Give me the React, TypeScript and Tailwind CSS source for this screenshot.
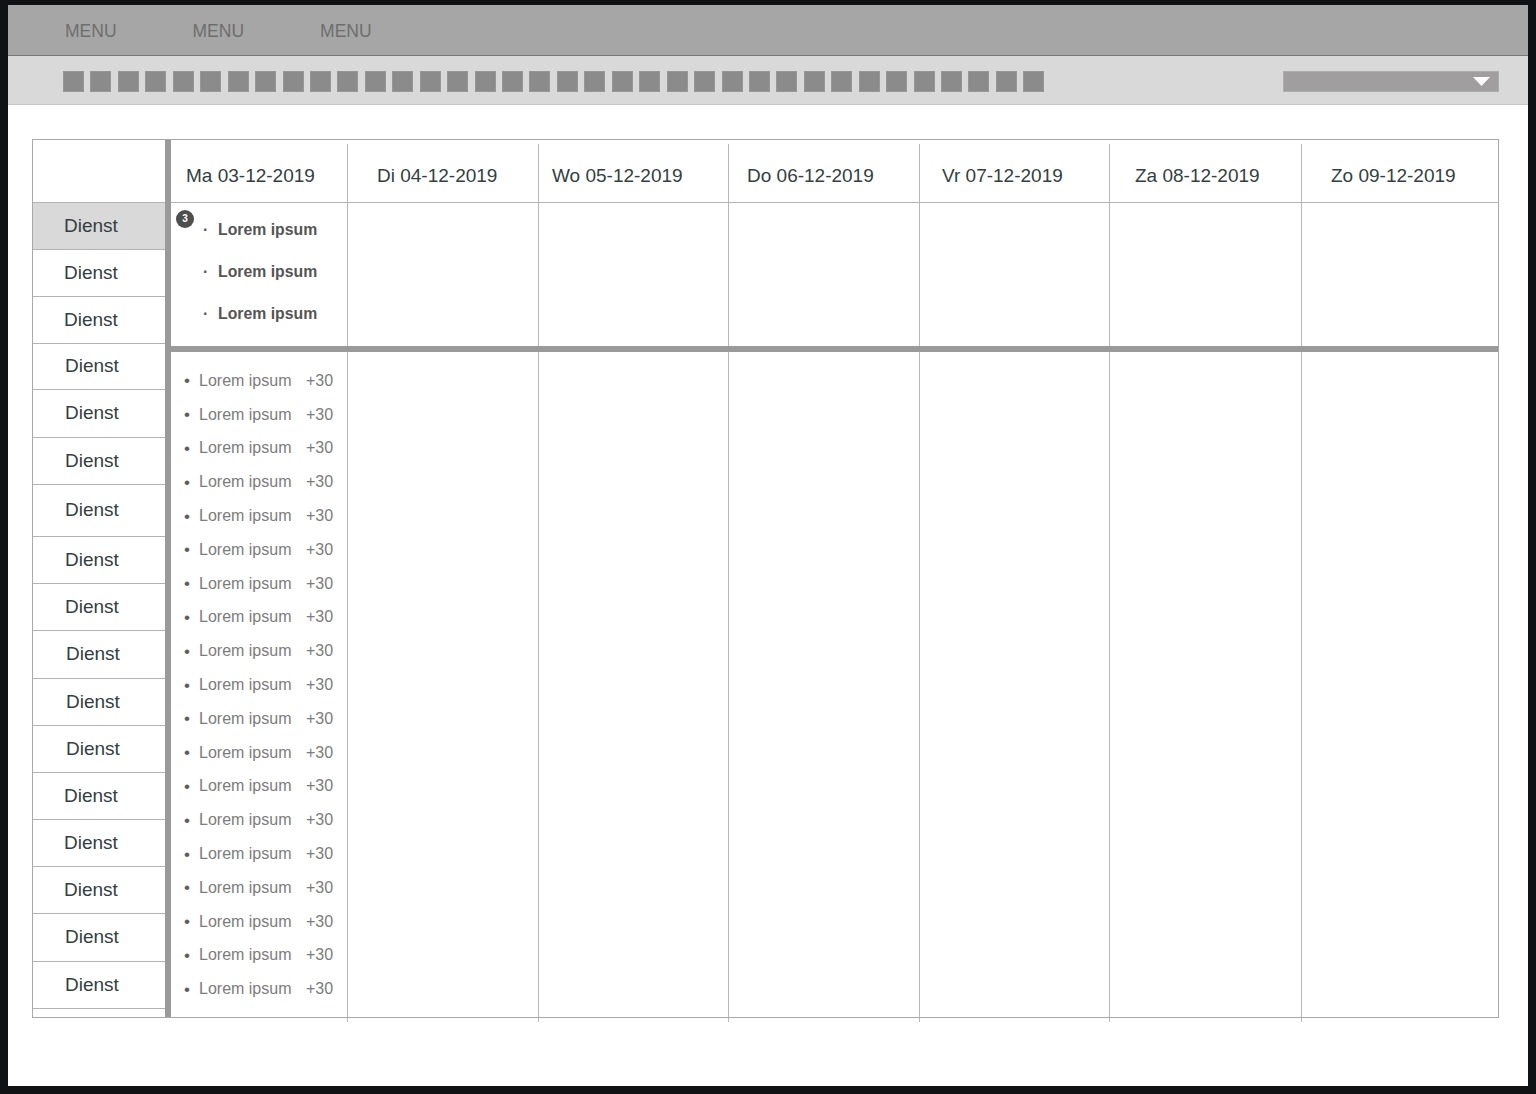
import React from "react";

const rows: { h: string; pl: string; bg?: string }[] = [
  { h: "h-[46px]", pl: "pl-[31px]", bg: "bg-[#d9d9d9]" },
  { h: "h-[46px]", pl: "pl-[31px]" },
  { h: "h-[46px]", pl: "pl-[31px]" },
  { h: "h-[45px]", pl: "pl-[32px]" },
  { h: "h-[47px]", pl: "pl-[32px]" },
  { h: "h-[46px]", pl: "pl-[32px]" },
  { h: "h-[51px]", pl: "pl-[32px]" },
  { h: "h-[46px]", pl: "pl-[32px]" },
  { h: "h-[46px]", pl: "pl-[32px]" },
  { h: "h-[47px]", pl: "pl-[33px]" },
  { h: "h-[46px]", pl: "pl-[33px]" },
  { h: "h-[46px]", pl: "pl-[33px]" },
  { h: "h-[46px]", pl: "pl-[31px]" },
  { h: "h-[46px]", pl: "pl-[31px]" },
  { h: "h-[46px]", pl: "pl-[31px]" },
  { h: "h-[47px]", pl: "pl-[32px]" },
  { h: "h-[46px]", pl: "pl-[32px]" },
];

const cols: { w: string; label: string; pl: string; first?: boolean }[] = [
  { w: "w-[176px]", label: "Ma 03-12-2019", pl: "pl-[15px]", first: true },
  { w: "w-[191px]", label: "Di 04-12-2019", pl: "pl-[29px]" },
  { w: "w-[190px]", label: "Wo 05-12-2019", pl: "pl-[13px]" },
  { w: "w-[191px]", label: "Do 06-12-2019", pl: "pl-[18px]" },
  { w: "w-[190px]", label: "Vr 07-12-2019", pl: "pl-[22px]" },
  { w: "w-[192px]", label: "Za 08-12-2019", pl: "pl-[25px]" },
  { w: "flex-1", label: "Zo 09-12-2019", pl: "pl-[29px]" },
];

const squares = Array.from({ length: 36 }, (_, i) => i);
const items = Array.from({ length: 19 }, (_, i) => i);

export default function App() {
  return (
    <div className="w-[1536px] h-[1094px] bg-[#111214] pt-[5px] pl-[8px] font-['Liberation_Sans',Arial,sans-serif]">
      <div className="w-[1520px] h-[1081px] bg-white flex flex-col">
        {/* Menu bar */}
        <div className="h-[51px] bg-[#a6a6a6] border-b border-[#787878] flex items-center pl-[57px] gap-[76px] pt-[3px]">
          {["MENU", "MENU", "MENU"].map((m, i) => (
            <span key={i} className="text-[17.5px] text-[#6e6e6e] leading-none">
              {m}
            </span>
          ))}
        </div>
        {/* Toolbar */}
        <div className="h-[49px] bg-[#d9d9d9] border-b border-[#c9c9c9] flex items-start pt-[15px] pl-[55px] pr-[29px]">
          <div className="flex gap-[6.45px]">
            {squares.map((s) => (
              <div key={s} className="w-[21px] h-[21px] bg-[#8b8b8b] border border-[#979797]" />
            ))}
          </div>
          <div className="ml-auto w-[216px] h-[21px] bg-[#a09e9e] border border-[#adadad] flex items-center justify-end pr-[8px]">
            <svg width="17" height="9" viewBox="0 0 17 9">
              <polygon points="0,0 17,0 8.5,9" fill="#ffffff" />
            </svg>
          </div>
        </div>
        {/* Table */}
        <div className="pl-[24px] pt-[34px]">
          <div className="w-[1467px] h-[879px] border border-[#a9a9a9] flex">
            {/* Left column */}
            <div className="w-[132px] flex flex-col">
              <div className="h-[63px] border-b border-[#b3b3b3]" />
              {rows.map((r, i) => (
                <div
                  key={i}
                  className={`${r.h} ${r.pl} ${r.bg ?? ""} box-content border-b border-[#b3b3b3] flex items-center text-[19px] text-[#33403f] leading-none`}
                >
                  <span className="pb-[2px]">Dienst</span>
                </div>
              ))}
            </div>
            {/* Thick bar */}
            <div className="w-[6px] bg-[#9a9a9a]" />
            {/* Right area */}
            <div className="flex-1 flex flex-col">
              {/* Header */}
              <div className="h-[63px] border-b border-[#b3b3b3] flex items-end">
                {cols.map((c, i) => (
                  <div
                    key={i}
                    className={`${c.w} ${c.pl} h-[58px] ${c.first ? "" : "border-l border-[#b8b8b8]"} flex items-center pt-[4px] text-[19px] text-[#33403f] leading-none`}
                  >
                    {c.label}
                  </div>
                ))}
              </div>
              {/* Events row */}
              <div className="h-[143px] flex">
                {cols.map((c, i) => (
                  <div key={i} className={`${c.w} ${c.first ? "" : "border-l border-[#b8b8b8]"} relative`}>
                    {c.first && (
                      <>
                        <div className="absolute left-[5px] top-[7px] w-[18px] h-[18px] rounded-full bg-[#4e4e4e] flex items-center justify-center text-white text-[10px] font-bold leading-none">
                          3
                        </div>
                        <div className="pt-[6px] pl-[32px] flex flex-col">
                          {[0, 1, 2].map((k) => (
                            <div key={k} className="h-[42px] flex items-center text-[15.8px] font-bold text-[#555555] leading-none">
                              <span className="w-[15px]">·</span>
                              <span>Lorem ipsum</span>
                            </div>
                          ))}
                        </div>
                      </>
                    )}
                  </div>
                ))}
              </div>
              {/* Thick horizontal bar */}
              <div className="h-[6px] bg-[#9a9a9a]" />
              {/* Body */}
              <div className="flex-1 flex">
                {cols.map((c, i) => (
                  <div key={i} className={`${c.w} ${c.first ? "" : "border-l border-[#b8b8b8]"} relative`}>
                    {!c.first && (
                      <div className="absolute left-[-1px] bottom-[-5px] w-[1px] h-[4px] bg-[#b8b8b8]" />
                    )}
                    {c.first && (
                      <div className="pt-[12px] pl-[13px] flex flex-col">
                        {items.map((k) => (
                          <div key={k} className="h-[33.8px] flex items-center text-[16px] text-[#7c7c7c] leading-none">
                            <span className="w-[15px] text-[#5e5e5e] text-[17px]">•</span>
                            <span className="w-[107px]">Lorem ipsum</span>
                            <span>+30</span>
                          </div>
                        ))}
                      </div>
                    )}
                  </div>
                ))}
              </div>
            </div>
          </div>
        </div>
      </div>
    </div>
  );
}
